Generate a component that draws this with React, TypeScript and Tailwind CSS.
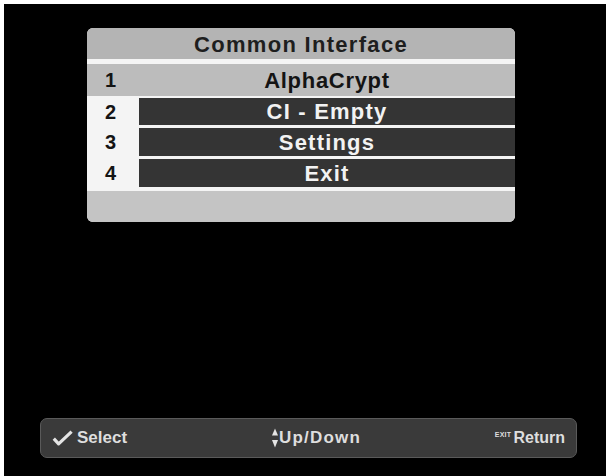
import React from 'react'

// Common Interface menu of a set-top box, shown on a black TV screen

const items = [
  { n: '2', label: 'CI - Empty' },
  { n: '3', label: 'Settings' },
  { n: '4', label: 'Exit' },
]

function CheckIcon() {
  return (
    <svg width="21" height="16" viewBox="0 0 21 16" className="shrink-0">
      <path
        d="M1.8 8.6 L6.6 13.8 L19.6 1.6"
        fill="none"
        stroke="#e4e4e4"
        strokeWidth="3.2"
        strokeLinejoin="round"
      />
    </svg>
  )
}

function UpDownIcon() {
  return (
    <svg width="6" height="20" viewBox="0 0 6 20" className="shrink-0">
      <polygon points="3,0.5 6,7.5 0,7.5" fill="#e4e4e4" />
      <polygon points="0,12 6,12 3,19.5" fill="#e4e4e4" />
    </svg>
  )
}

export default function App() {
  return (
    <div className="flex h-[476px] w-[609px] flex-col border-t-4 border-l-4 border-r-[3px] border-white bg-black font-['Liberation_Sans',Arial,sans-serif]">
      {/* menu panel */}
      <div className="mt-[24px] ml-[83px] flex h-[194px] w-[428px] flex-col overflow-hidden rounded-[6px] bg-[#f4f4f4]">
        <div className="flex h-[31px] items-center justify-center bg-[#b4b4b4] pt-[1px] text-[22px] font-bold tracking-[1.3px] text-[#1e1e1e]">
          Common Interface
        </div>
        <div className="h-[5px]" />
        <div className="flex h-[32px] items-center bg-[#bcbcbc] text-[#141414]">
          <div className="w-[52px] pl-[18px] text-[20px] font-bold">1</div>
          <div className="flex-1 text-center text-[22px] font-bold tracking-[0.7px]">AlphaCrypt</div>
        </div>
        <div className="mt-[2px] flex flex-col gap-[3px]">
          {items.map((it, i) => (
            <div key={it.n} className={`flex items-stretch ${i === 0 ? 'h-[27px]' : 'h-[28px]'}`}>
              <div className="flex w-[52px] items-center pl-[18px] text-[20px] font-bold text-[#141414]">
                {it.n}
              </div>
              <div className="flex flex-1 items-center justify-center bg-[#343434] text-[22px] font-bold tracking-[1.2px] text-[#f2f2f2]">
                {it.label}
              </div>
            </div>
          ))}
        </div>
        <div className="h-[4px]" />
        <div className="flex-1 bg-[#c4c4c4]" />
      </div>

      {/* help bar */}
      <div className="mt-auto mb-[18px] ml-[36px] flex h-[40px] w-[537px] items-center rounded-[7px] border border-[#5a5a5a] bg-[#3a3a3a] px-[11px] font-bold text-[#dedede]">
        <div className="flex w-[220px] items-center">
          <CheckIcon />
          <span className="ml-[4px] text-[17px]">Select</span>
        </div>
        <div className="flex items-center">
          <UpDownIcon />
          <span className="ml-[1px] text-[17px] tracking-[1.2px]">Up/Down</span>
        </div>
        <div className="ml-auto flex items-center">
          <span className="mb-[8px] text-[7px] leading-none tracking-[0.3px]">EXIT</span>
          <span className="ml-[2px] text-[16px]">Return</span>
        </div>
      </div>
    </div>
  )
}
